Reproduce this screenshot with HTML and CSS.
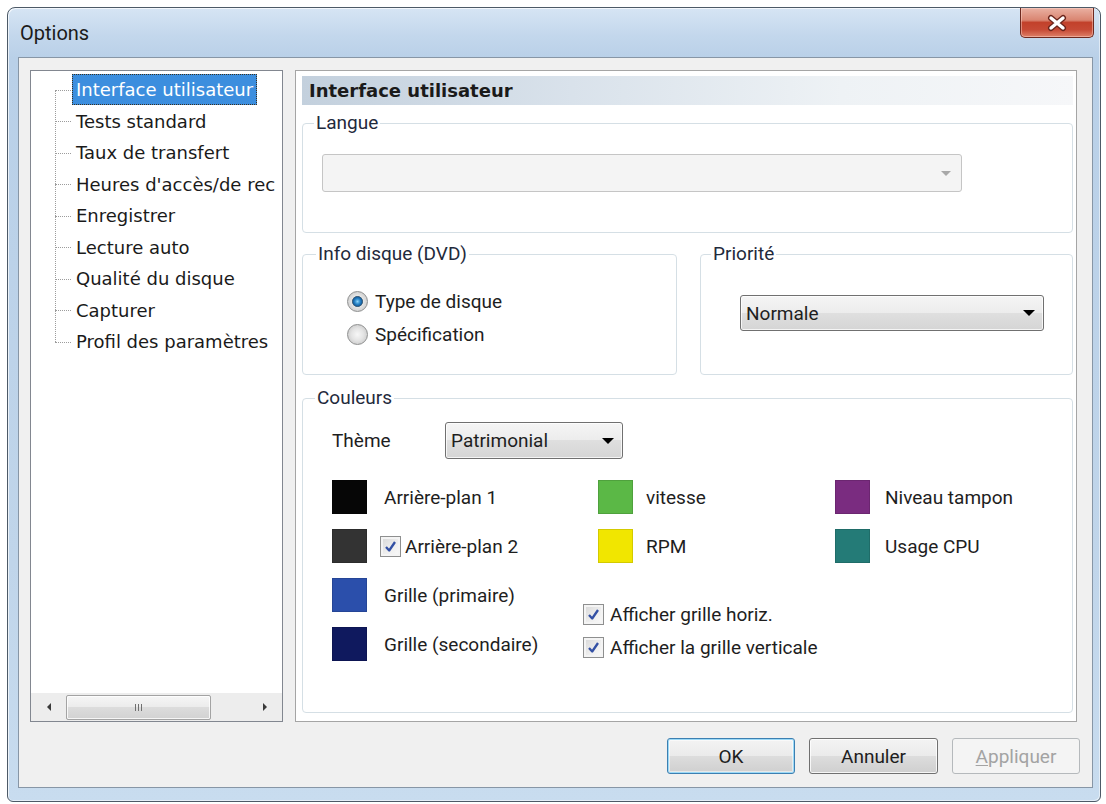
FILE: index.html
```html
<!DOCTYPE html>
<html>
<head>
  <meta charset="utf-8">
  <title>Options</title>
  <link rel="stylesheet" href="styles.css">
</head>
<body>
  <div class="window">
    <div class="titlebar">
      <span class="title">Options</span>
      <button class="close-btn" aria-label="Fermer">
        <svg width="24" height="18" viewBox="0 0 24 18">
          <path d="M6 4 L18 14 M18 4 L6 14" stroke="#6a241b" stroke-width="6" stroke-linecap="round"/>
          <path d="M6 4 L18 14 M18 4 L6 14" stroke="#ffffff" stroke-width="3.4" stroke-linecap="round"/>
        </svg>
      </button>
    </div>

    <div class="client">
      <div class="main">
        <div class="tree">
          <ul class="tree-list">
            <li class="selected"><span>Interface utilisateur</span></li>
            <li><span>Tests standard</span></li>
            <li><span>Taux de transfert</span></li>
            <li><span>Heures d'accès/de rec</span></li>
            <li><span>Enregistrer</span></li>
            <li><span>Lecture auto</span></li>
            <li><span>Qualité du disque</span></li>
            <li><span>Capturer</span></li>
            <li><span>Profil des paramètres</span></li>
          </ul>
          <div class="hscroll">
            <span class="sb-btn"><i class="tri-left"></i></span>
            <span class="sb-thumb"><i class="grip"></i></span>
            <span class="sb-track"></span>
            <span class="sb-btn"><i class="tri-right"></i></span>
          </div>
        </div>

        <div class="panel">
          <div class="panel-title">Interface utilisateur</div>

          <fieldset class="group group-langue">
            <legend>Langue</legend>
            <div class="combo combo-langue disabled"><span></span><i class="arrow"></i></div>
          </fieldset>

          <div class="group-row">
            <fieldset class="group group-info">
              <legend>Info disque (DVD)</legend>
              <label class="radio-row"><span class="radio checked"></span>Type de disque</label>
              <label class="radio-row"><span class="radio"></span>Spécification</label>
            </fieldset>
            <fieldset class="group group-prio">
              <legend>Priorité</legend>
              <div class="combo combo-prio"><span>Normale</span><i class="arrow"></i></div>
            </fieldset>
          </div>

          <fieldset class="group group-colors">
            <legend>Couleurs</legend>
            <div class="theme-row">
              <span class="theme-label">Thème</span>
              <div class="combo combo-theme"><span>Patrimonial</span><i class="arrow"></i></div>
            </div>

            <div class="swatches">
              <div class="col col-1">
                <div class="swatch-row"><span class="swatch sw-black"></span><span class="sw-label">Arrière-plan 1</span></div>
                <div class="swatch-row">
                  <span class="swatch sw-dark"></span>
                  <span class="checkbox inline-check"><svg viewBox="0 0 13 13"><path d="M2 7 L5.2 10.5 L11 2"/></svg></span>
                  <span class="sw-label tight">Arrière-plan 2</span>
                </div>
                <div class="swatch-row"><span class="swatch sw-blue"></span><span class="sw-label">Grille (primaire)</span></div>
                <div class="swatch-row"><span class="swatch sw-navy"></span><span class="sw-label">Grille (secondaire)</span></div>
              </div>

              <div class="col col-2">
                <div class="swatch-row"><span class="swatch sw-green"></span><span class="sw-label">vitesse</span></div>
                <div class="swatch-row"><span class="swatch sw-yellow"></span><span class="sw-label">RPM</span></div>
                <label class="check-row first">
                  <span class="checkbox"><svg viewBox="0 0 13 13"><path d="M2 7 L5.2 10.5 L11 2"/></svg></span>
                  Afficher grille horiz.
                </label>
                <label class="check-row">
                  <span class="checkbox"><svg viewBox="0 0 13 13"><path d="M2 7 L5.2 10.5 L11 2"/></svg></span>
                  Afficher la grille verticale
                </label>
              </div>

              <div class="col col-3">
                <div class="swatch-row"><span class="swatch sw-purple"></span><span class="sw-label">Niveau tampon</span></div>
                <div class="swatch-row"><span class="swatch sw-teal"></span><span class="sw-label">Usage CPU</span></div>
              </div>
            </div>
          </fieldset>
        </div>
      </div>

      <div class="footer">
        <button class="btn default">OK</button>
        <button class="btn wide">Annuler</button>
        <button class="btn" disabled><u>A</u>ppliquer</button>
      </div>
    </div>
  </div>
</body>
</html>
```

FILE: styles.css
```css
* {
  box-sizing: border-box;
}

body {
  margin: 0;
  background: #fff;
  font-family: Roboto, "Liberation Sans", sans-serif;
  font-size: 19px;
  color: #1e1e1e;
}

/* window frame */

.window {
  width: 1094px;
  height: 795px;
  margin: 7px 0 0 7px;
  padding: 0 7px 13px 10px;
  display: flex;
  flex-direction: column;
  border: 1px solid #4d5a67;
  border-radius: 8px 8px 6px 6px;
  background: linear-gradient(to bottom, #d6e5f4 0, #c3d7ec 28px, #b9d0e8 50px, #c0d5ea 70%, #c8dcef 100%);
  box-shadow: inset 1px 1px 0 rgba(255, 255, 255, 0.7), inset -1px -1px 0 rgba(255, 255, 255, 0.5);
}

.titlebar {
  height: 49px;
  display: flex;
  align-items: center;
  justify-content: space-between;
  padding-left: 2px;
}

.title {
  font-size: 20px;
  color: #1b1b1b;
}

.close-btn {
  align-self: flex-start;
  width: 74px;
  height: 30px;
  margin-right: -1px;
  padding: 0;
  display: flex;
  align-items: center;
  justify-content: center;
  border: 1px solid #6e2a20;
  border-top: none;
  border-radius: 0 0 5px 5px;
  background: linear-gradient(to bottom, #eab0a2 0, #d98571 42%, #c2412b 50%, #c64a35 75%, #de8068 100%);
  box-shadow: inset 0 0 0 1px rgba(255, 220, 210, 0.45);
}

.client {
  flex: 1;
  display: flex;
  flex-direction: column;
  background: #f0f0f0;
  border: 1px solid #8796a6;
  padding: 12px 15px 13px 11px;
}

.main {
  flex: 1;
  display: flex;
  gap: 12px;
  min-height: 0;
}

/* left tree */

.tree {
  width: 253px;
  border: 1px solid #828790;
  background: #fff;
  display: flex;
  flex-direction: column;
  font-family: "DejaVu Sans", sans-serif;
  font-size: 18px;
  color: #1a1a1a;
}

.tree-list {
  flex: 1;
  list-style: none;
  margin: 0;
  padding: 3px 0 0;
  position: relative;
  overflow: hidden;
}

.tree-list::before {
  content: '';
  position: absolute;
  left: 24px;
  top: 19px;
  height: 252px;
  border-left: 1px dotted #9c9c9c;
}

.tree-list li {
  position: relative;
  height: 31.5px;
  line-height: 31.5px;
  padding-left: 41px;
  white-space: nowrap;
}

.tree-list li::before {
  content: '';
  position: absolute;
  left: 24px;
  top: 50%;
  width: 16px;
  border-top: 1px dotted #9c9c9c;
}

.tree-list li span {
  display: inline-block;
  line-height: 29px;
  padding: 0 3px;
  border: 1px dotted transparent;
}

.tree-list li.selected span {
  background: #3c8ede;
  color: #fff;
  border-color: #3a3020;
}

.hscroll {
  height: 28px;
  display: flex;
  align-items: center;
  background: #ededed;
}

.sb-btn {
  width: 35px;
  height: 100%;
  display: flex;
  align-items: center;
  justify-content: center;
}

.tri-left {
  border-top: 4px solid transparent;
  border-bottom: 4px solid transparent;
  border-right: 4px solid #3a3a3a;
}

.tri-right {
  border-top: 4px solid transparent;
  border-bottom: 4px solid transparent;
  border-left: 4px solid #3a3a3a;
}

.sb-thumb {
  width: 145px;
  height: 25px;
  display: flex;
  align-items: center;
  justify-content: center;
  border: 1px solid #a3a3a3;
  border-radius: 2px;
  background: linear-gradient(to bottom, #f6f6f6 0, #ebebeb 50%, #dcdcdc 50%, #d2d2d2 100%);
  box-shadow: inset 0 0 0 1px rgba(255, 255, 255, 0.8);
}

.grip {
  width: 8px;
  height: 7px;
  background: repeating-linear-gradient(to right, #707070 0 1px, transparent 1px 3px);
}

.sb-track {
  flex: 1;
}

/* right panel */

.panel {
  flex: 1;
  display: flex;
  flex-direction: column;
  background: #fff;
  border: 1px solid #a5a5a5;
  padding: 5px 3px 8px 6px;
}

.panel-title {
  height: 29px;
  line-height: 29px;
  padding-left: 7px;
  font-family: "DejaVu Sans", sans-serif;
  font-weight: bold;
  font-size: 18px;
  color: #1a1a1a;
  background: linear-gradient(to right, #c3d0dd 0, #d9e2eb 35%, #eef2f5 70%, #f6f7f9 100%);
}

/* --pad is the left inset of a group's content; the legend sits 11px from the edge */
.group {
  --pad: 0px;
  margin: 0;
  padding: 0 0 0 var(--pad);
  min-width: 0;
  border: 1px solid #d5dfe5;
  border-radius: 4px;
}

.group legend {
  margin-left: calc(11px - var(--pad));
  padding: 0 2px;
  line-height: 20px;
  color: #1f2a3c;
}

.group-langue {
  --pad: 19px;
  margin-top: 8px;
  padding-top: 21px;
  padding-bottom: 40px;
}

.group-row {
  display: flex;
  gap: 23px;
  margin-top: 11px;
}

.group-info {
  --pad: 44px;
  width: 375px;
  padding-top: 21px;
  padding-bottom: 23px;
}

.group-info legend {
  margin-left: calc(13px - var(--pad));
}

.group-prio {
  --pad: 39px;
  flex: 1;
  padding-top: 31px;
  padding-bottom: 43px;
}

.group-prio legend {
  margin-left: calc(10px - var(--pad));
}

.group-colors {
  --pad: 29px;
  flex: 1;
  margin-top: 13px;
  padding-top: 14px;
}

.group-colors legend {
  margin-left: calc(12px - var(--pad));
}

/* combos */

.combo {
  display: flex;
  align-items: center;
  justify-content: space-between;
  padding: 0 8px 0 5px;
  border: 1px solid #707070;
  border-radius: 3px;
  background: linear-gradient(to bottom, #f5f5f5 0, #ececec 50%, #dfdfdf 50%, #d5d5d5 100%);
  box-shadow: inset 0 0 0 1px rgba(255, 255, 255, 0.75);
}

.combo .arrow {
  border-left: 6px solid transparent;
  border-right: 6px solid transparent;
  border-top: 6px solid #000;
}

.combo.disabled {
  background: #f4f4f4;
  border-color: #c5c5c5;
  box-shadow: none;
  padding-right: 10px;
}

.combo.disabled .arrow {
  border-left-width: 5px;
  border-right-width: 5px;
  border-top: 5px solid #a8a8a8;
}

.combo-langue {
  width: 640px;
  height: 38px;
}

.combo-prio {
  width: 304px;
  height: 36px;
}

.combo-theme {
  width: 178px;
  height: 37px;
}

/* radios and checkboxes */

.radio-row {
  display: flex;
  align-items: center;
  gap: 7px;
  height: 33px;
}

.radio {
  width: 21px;
  height: 21px;
  border-radius: 50%;
  border: 1px solid #8e8f8f;
  background: radial-gradient(circle at 50% 50%, #f7f7f7 0, #e4e4e4 45%, #cfcfcf 75%, #bcbcbc 100%);
}

.radio.checked {
  background:
    radial-gradient(circle, #8fd3f8 0, #2f8ccd 2.5px, #165d9c 4.5px, #4d6678 5.2px, transparent 5.8px),
    radial-gradient(circle at 50% 50%, #f7f7f7 0, #e4e4e4 45%, #cfcfcf 75%, #bcbcbc 100%);
}

.checkbox {
  width: 21px;
  height: 21px;
  flex: none;
  display: flex;
  align-items: center;
  justify-content: center;
  border: 1px solid #8e8f8f;
  background: linear-gradient(135deg, #d6d6d6 0, #eeeeee 55%, #fafafa 100%);
  box-shadow: inset 0 0 0 2px #f4f4f4;
}

.checkbox svg {
  width: 13px;
  height: 13px;
}

.checkbox path {
  fill: none;
  stroke: #3350a4;
  stroke-width: 2.3;
  stroke-linejoin: round;
}

/* colour swatches */

.theme-row {
  display: flex;
  align-items: center;
  height: 37px;
}

.theme-label {
  width: 113px;
}

.swatches {
  display: flex;
  margin-top: 21px;
}

.col {
  display: flex;
  flex-direction: column;
  gap: 15px;
}

.col-1 {
  width: 251px;
}

.col-2 {
  width: 252px;
}

.swatch-row {
  display: flex;
  align-items: center;
  height: 34px;
}

.col-2 .swatch-row {
  padding-left: 15px;
}

.swatch {
  width: 35px;
  height: 34px;
  flex: none;
  border: 1px solid rgba(0, 0, 0, 0.12);
}

.sw-label {
  margin-left: 17px;
}

.col-2 .sw-label {
  margin-left: 13px;
}

.col-3 .sw-label {
  margin-left: 15px;
}

.inline-check {
  margin-left: 13px;
}

.sw-label.tight {
  margin-left: 4px;
}

.check-row {
  display: flex;
  align-items: center;
  gap: 6px;
  height: 33px;
  margin-top: -15px;
}

.check-row.first {
  margin-top: 20px;
}

.sw-black { background: #060606; }
.sw-dark { background: #333333; }
.sw-blue { background: #2b4fab; }
.sw-navy { background: #0f195e; }
.sw-green { background: #5bb846; }
.sw-yellow { background: #f1e600; }
.sw-purple { background: #7a2c80; }
.sw-teal { background: #247b77; }

/* buttons */

.footer {
  display: flex;
  justify-content: flex-end;
  gap: 14px;
  margin-top: 16px;
  margin-right: -3px;
}

.btn {
  width: 128px;
  height: 36px;
  padding: 0;
  font-family: Roboto, "Liberation Sans", sans-serif;
  font-size: 19px;
  color: #1e1e1e;
  border: 1px solid #707070;
  border-radius: 3px;
  background: linear-gradient(to bottom, #f3f3f3 0, #ebebeb 50%, #dddddd 50%, #cfcfcf 100%);
  box-shadow: inset 0 0 0 1px rgba(255, 255, 255, 0.8);
}

.btn.wide {
  width: 129px;
}

.btn.default {
  border-color: #3c7fb1;
  box-shadow: inset 0 0 0 1px #9bd9f7, inset 0 0 0 2px rgba(255, 255, 255, 0.5);
}

.btn:disabled {
  color: #a3a3a3;
  border-color: #b5b9bc;
  background: #f4f4f4;
  box-shadow: none;
}

.btn u {
  text-underline-offset: 2px;
}
```
